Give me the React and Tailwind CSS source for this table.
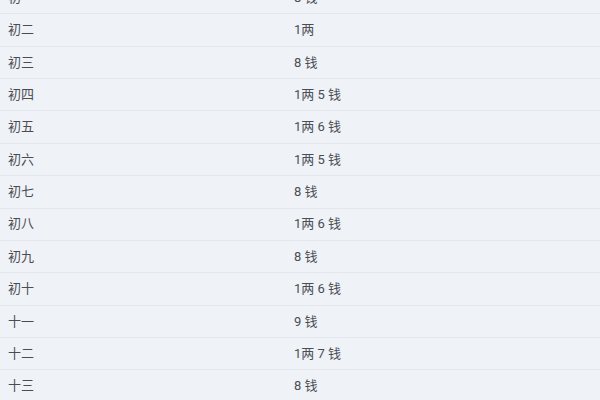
import React from 'react';

const rows = [
  ['初一', '8 钱'],
  ['初二', '1两'],
  ['初三', '8 钱'],
  ['初四', '1两 5 钱'],
  ['初五', '1两 6 钱'],
  ['初六', '1两 5 钱'],
  ['初七', '8 钱'],
  ['初八', '1两 6 钱'],
  ['初九', '8 钱'],
  ['初十', '1两 6 钱'],
  ['十一', '9 钱'],
  ['十二', '1两 7 钱'],
  ['十三', '8 钱'],
  ['十四', '1两'],
];

const App = () => {
  return (
    <div className="h-[400px] w-[600px] overflow-hidden bg-[#eff2f7] font-['Roboto','Noto_Sans_CJK_SC',sans-serif] text-[13px] text-[#4a4d52]">
      <div className="mt-[-18px]">
        {rows.map(([day, amount], i) => (
          <div
            key={i}
            className="grid h-[32.36px] grid-cols-[286px_1fr] items-center border-b border-[#e4e8ee] px-2"
          >
            <span>{day}</span>
            <span>{amount}</span>
          </div>
        ))}
      </div>
    </div>
  );
};

export default App;
